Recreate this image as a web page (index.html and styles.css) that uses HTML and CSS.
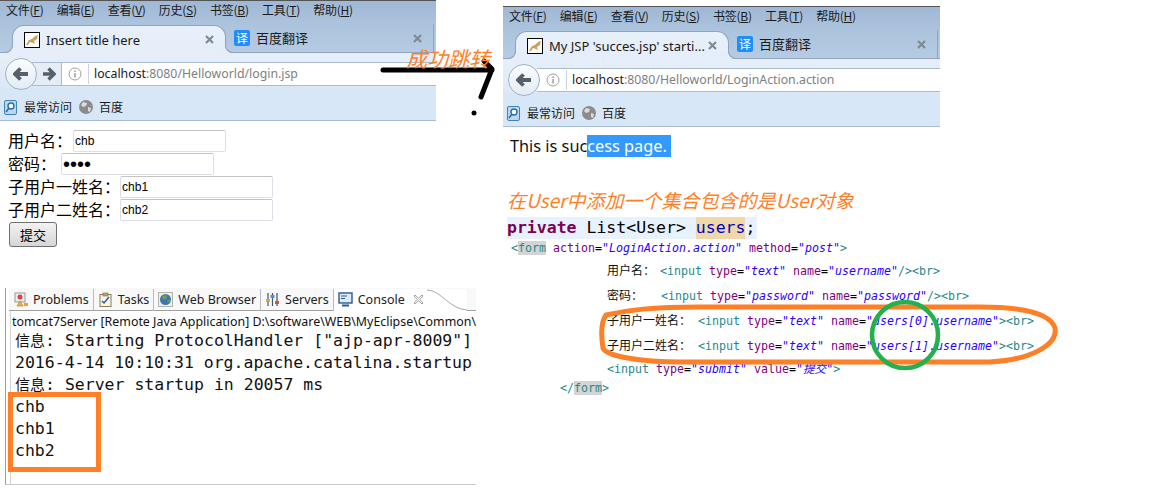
FILE: index.html
```html
<!DOCTYPE html>
<html lang="zh">
<head>
<meta charset="utf-8">
<title>Login collage</title>
<link rel="stylesheet" href="styles.css">
</head>
<body>
<svg width="0" height="0" class="defs">
  <defs>
    <symbol id="tomcat" viewBox="0 0 16 16">
      <rect x=".5" y=".5" width="15" height="15" fill="#fff" stroke="#000"/>
      <path d="M2 13l3-5 3-1 3-3 3-1-1 4-3 2 1 3-2-1-3-1-2 3z" fill="#c9a25c"/>
    </symbol>
    <symbol id="lib" viewBox="0 0 14 15">
      <rect x=".5" y=".5" width="12" height="14" rx="1.5" fill="#bcd8f0" stroke="#3f82b8"/>
      <circle cx="7" cy="6" r="3" fill="#fff" stroke="#2b6ea6" stroke-width="1.4"/>
      <path d="M5 8l-3 4" stroke="#2b6ea6" stroke-width="1.6"/>
    </symbol>
    <symbol id="globe" viewBox="0 0 14 14">
      <circle cx="7" cy="7" r="7" fill="#8b8b8b"/>
      <path d="M4 2l4 1-1 3-3 1-2-2zM9 7l3 1-1 4-2-1z" fill="#dcdcdc"/>
    </symbol>
    <symbol id="back" viewBox="0 0 16 14">
      <path d="M7.500 1.500L2 7l5.500 5.500M3 7h12" fill="none" stroke="#56606a" stroke-width="3.800"/>
    </symbol>
    <symbol id="forward" viewBox="0 0 14 14">
      <path d="M6.500 1.500L12 7l-5.500 5.500M11 7H1" fill="none" stroke="#56606a" stroke-width="3.400"/>
    </symbol>
    <symbol id="info" viewBox="0 0 14 14">
      <circle cx="7" cy="7" r="6" fill="none" stroke="#a0a0a0"/>
      <path d="M7 6v4.500M7 3.500v1.500" stroke="#909090" stroke-width="1.300"/>
    </symbol>
    <symbol id="close" viewBox="0 0 9 9">
      <path d="M1 1l7 7M8 1L1 8" stroke="#7f8a96" stroke-width="2.200"/>
    </symbol>
    <symbol id="i-problems" viewBox="0 0 15 15">
      <rect x="2" y="1" width="10" height="9" fill="#eee" stroke="#999"/>
      <circle cx="7" cy="5" r="2.500" fill="#d8404a"/>
      <path d="M4 14l3-5 3 5z" fill="#f2b632" stroke="#a87a10" stroke-width=".6"/>
      <path d="M11 14h4v-3h-4z" fill="#e9a23b"/>
    </symbol>
    <symbol id="i-tasks" viewBox="0 0 15 15">
      <rect x="2" y="2.500" width="11" height="12" fill="#fbf6e4" stroke="#8c7a50"/>
      <rect x="5" y="1" width="5" height="3" fill="#b5a577" stroke="#7a6a40" stroke-width=".6"/>
      <path d="M4 9l2 2 5-6" fill="none" stroke="#2f55b8" stroke-width="1.500"/>
    </symbol>
    <symbol id="i-web" viewBox="0 0 15 15">
      <rect x=".5" y=".5" width="14" height="14" fill="#eef0ea" stroke="#b3b3a6"/>
      <circle cx="7.500" cy="7.500" r="5.500" fill="#3f76b0"/>
      <path d="M4 4l4-1 1 3-3 2zM9 8l3 0-2 3z" fill="#6fa344"/>
    </symbol>
    <symbol id="i-servers" viewBox="0 0 15 15">
      <path d="M3 1v13M7.500 1v13M12 1v13" stroke="#45556a" stroke-width="1.200"/>
      <rect x="1" y="7" width="4" height="3" fill="#d9a93a"/>
      <rect x="5.500" y="3" width="4" height="3" fill="#5c8fc4"/>
      <rect x="10" y="9" width="4" height="3" fill="#c95a3c"/>
    </symbol>
    <symbol id="i-console" viewBox="0 0 15 15">
      <rect x="1" y="1" width="13" height="10" fill="#dfeaf6" stroke="#2a5a8e" stroke-width="1.400"/>
      <path d="M3 4h6M3 6.500h4" stroke="#2a5a8e"/>
      <path d="M4 13.500h7" stroke="#2a5a8e" stroke-width="2"/>
    </symbol>
    <symbol id="i-x" viewBox="0 0 11 11">
      <path d="M2 1l3.500 3.200L9 1l1 1-3.200 3.500L10 9 9 10 5.500 6.800 2 10 1 9l3.200-3.500L1 2z" fill="#fff" stroke="#8a8a8a" stroke-width=".8"/>
    </symbol>
  </defs>
</svg>

<section class="window win-left">
  <div class="menubar"><span>文件(<u>F</u>)</span><span>编辑(<u>E</u>)</span><span>查看(<u>V</u>)</span><span>历史(<u>S</u>)</span><span>书签(<u>B</u>)</span><span>工具(<u>T</u>)</span><span>帮助(<u>H</u>)</span></div>
  <div class="tabstrip">
    <div class="tab tab-active"><svg class="fav"><use href="#tomcat"/></svg><span class="tab-title">Insert title here</span><svg class="x"><use href="#close"/></svg></div>
    <div class="tab tab-rest"><span class="yi">译</span><span class="tab-title">百度翻译</span><svg class="x"><use href="#close"/></svg></div>
  </div>
  <div class="navbar">
    <div class="backbtn"><svg class="arrow"><use href="#back"/></svg></div>
    <div class="fwdbtn"><svg class="arrow-f"><use href="#forward"/></svg></div>
    <div class="urlbar"><svg class="info"><use href="#info"/></svg><span class="url"><b>localhost</b>:8080/Helloworld/login.jsp</span></div>
  </div>
  <div class="bookmarks"><svg class="lib"><use href="#lib"/></svg><span>最常访问</span><svg class="globe"><use href="#globe"/></svg><span>百度</span></div>
</section>

<form class="login">
  <div class="row"><span class="lbl">用户名<span class="colon">：</span></span><input class="field gap-1" value="chb"></div>
  <div class="row"><span class="lbl">密码<span class="colon">：</span></span><input class="field pw" type="password" value="abcd"></div>
  <div class="row"><span class="lbl">子用户一姓名<span class="colon">：</span></span><input class="field" value="chb1"></div>
  <div class="row"><span class="lbl">子用户二姓名<span class="colon">：</span></span><input class="field" value="chb2"></div>
  <button class="submit" type="button">提交</button>
</form>

<section class="console">
  <div class="views">
    <span class="view"><svg class="ico"><use href="#i-problems"/></svg>Problems</span>
    <span class="view"><svg class="ico"><use href="#i-tasks"/></svg>Tasks</span>
    <span class="view"><svg class="ico"><use href="#i-web"/></svg>Web Browser</span>
    <span class="view"><svg class="ico"><use href="#i-servers"/></svg>Servers</span>
    <span class="view view-on"><svg class="ico"><use href="#i-console"/></svg>Console<svg class="vx"><use href="#i-x"/></svg><svg class="curve" viewBox="0 0 40 22"><path d="M0 1C14 1 22 20 40 21" fill="none" stroke="#aaa"/></svg></span>
  </div>
  <div class="proc">tomcat7Server [Remote Java Application] D:\software\WEB\MyEclipse\Common\</div>
  <pre class="log"><span class="cjk">信息</span>: Starting ProtocolHandler ["ajp-apr-8009"]
2016-4-14 10:10:31 org.apache.catalina.startup
<span class="cjk">信息</span>: Server startup in 20057 ms
chb
chb1
chb2</pre>
</section>
<div class="box-orange"></div>

<section class="window win-right">
  <div class="menubar"><span>文件(<u>F</u>)</span><span>编辑(<u>E</u>)</span><span>查看(<u>V</u>)</span><span>历史(<u>S</u>)</span><span>书签(<u>B</u>)</span><span>工具(<u>T</u>)</span><span>帮助(<u>H</u>)</span></div>
  <div class="tabstrip">
    <div class="tab tab-active"><svg class="fav"><use href="#tomcat"/></svg><span class="tab-title">My JSP 'succes.jsp' starti...</span><svg class="x"><use href="#close"/></svg></div>
    <div class="tab tab-rest"><span class="yi">译</span><span class="tab-title">百度翻译</span><svg class="x"><use href="#close"/></svg></div>
  </div>
  <div class="navbar">
    <div class="backbtn"><svg class="arrow"><use href="#back"/></svg></div>
    <div class="urlbar url-right"><svg class="info"><use href="#info"/></svg><span class="url"><b>localhost</b>:8080/Helloworld/LoginAction.action</span></div>
  </div>
  <div class="bookmarks"><svg class="lib"><use href="#lib"/></svg><span>最常访问</span><svg class="globe"><use href="#globe"/></svg><span>百度</span></div>
</section>

<section class="notes">
  <p class="success">This is suc<span class="sel">cess page.&nbsp;</span></p>
  <p class="note2">在User中添加一个集合包含的是User对象</p>
  <div class="decl"><b>private</b> List&lt;User&gt; <span class="occ">users</span>;</div>
  <div class="code">
    <div class="ln ln-form"><i>&lt;</i><span class="hl"><i>form</i></span> <s>action</s>=<q>"LoginAction.action"</q> <s>method</s>=<q>"post"</q><i>&gt;</i></div>
    <div class="ln in1"><span class="zh">用户名<span class="colon">：</span></span><i>&lt;input</i> <s>type</s>=<q>"text"</q> <s>name</s>=<q>"username"</q><i>/&gt;&lt;br&gt;</i></div>
    <div class="ln in1"><span class="zh pw-label">密码<span class="colon">：</span></span><i>&lt;input</i> <s>type</s>=<q>"password"</q> <s>name</s>=<q>"password"</q><i>/&gt;&lt;br&gt;</i></div>
    <div class="ln in1"><span class="zh zh-long">子用户一姓名<span class="colon">：</span></span><i>&lt;input</i> <s>type</s>=<q>"text"</q> <s>name</s>=<q>"users[0].username"</q><i>&gt;&lt;br&gt;</i></div>
    <div class="ln in1"><span class="zh zh-long">子用户二姓名<span class="colon">：</span></span><i>&lt;input</i> <s>type</s>=<q>"text"</q> <s>name</s>=<q>"users[1].username"</q><i>&gt;&lt;br&gt;</i></div>
    <div class="ln in1"><i>&lt;input</i> <s>type</s>=<q>"submit"</q> <s>value</s>=<q>"提交"</q><i>&gt;</i></div>
    <div class="ln in0"><i>&lt;/</i><span class="hl"><i>form</i></span><i>&gt;</i></div>
  </div>
</section>

<svg class="annot" width="1161" height="497" viewBox="0 0 1161 497">
  <path d="M383 70H492M484 61L492 69 481 97" fill="none" stroke="#000" stroke-width="5" stroke-linecap="round" stroke-linejoin="round"/>
  <circle cx="474" cy="113" r="2.500" fill="#000"/>
  <path d="M606 315C630 310 650 307 700 307H980C1020 307 1050 312 1055 328 1058 345 1030 360 990 362H680C640 362 606 356 603 348 601 335 601 322 606 315Z" fill="none" stroke="#ff7f27" stroke-width="5"/>
  <circle cx="905" cy="335" r="33" fill="none" stroke="#22b14c" stroke-width="4.500"/>
</svg>
<div class="jump">成功跳转</div>
</body>
</html>
```

FILE: styles.css
```css
* { box-sizing: border-box; }
html, body { margin: 0; padding: 0; }
body {
  position: relative;
  width: 1161px;
  height: 497px;
  overflow: hidden;
  background: #fff;
  font-family: "Liberation Sans", "Noto Sans CJK SC", sans-serif;
  color: #000;
}
.defs { position: absolute; }
.colon { font-family: "Noto Sans CJK TC", sans-serif; }

/* browser windows */
.window {
  position: absolute;
  display: flex;
  flex-direction: column;
  overflow: hidden;
  background: #d8e7f7;
  border-bottom: 1px solid #a9bdd2;
}
.win-left { left: 0; top: 0; width: 436px; height: 121px; border-top: 1px solid #555; }
.win-right { left: 503px; top: 6px; width: 437px; height: 121px; border-top: 1px solid #555; }
.menubar {
  display: flex;
  gap: 13.200px;
  height: 19px;
  padding: 1px 0 0 6px;
  font: 12px/16px "Noto Sans CJK SC", sans-serif;
  color: #1a1a1a;
  background: linear-gradient(#9fb8d5, #a9c1db);
}
.menubar span { white-space: nowrap; letter-spacing: -0.25px; }
.tabstrip {
  display: flex;
  align-items: flex-end;
  height: 33px;
  padding-left: 12px;
  background: linear-gradient(#aac2dc, #b6cbe3);
  border-bottom: 1px solid #8ea5bd;
}
.tab {
  position: relative;
  display: flex;
  align-items: center;
  height: 28px;
  font: 13px/16px "Noto Sans", "Noto Sans CJK SC", sans-serif;
  color: #1a1a1a;
}
.tab-active {
  flex: none;
  width: 214px;
  background: linear-gradient(#e8f0fa, #e4edf9);
  border: 1px solid #8ea5bd;
  border-bottom: 0;
  border-radius: 12px 12px 0 0;
  margin-bottom: -1px;
  padding: 0 11px 0 11px;
}
.tab-active::before,
.tab-active::after {
  content: "";
  position: absolute;
  bottom: 0;
  width: 8px;
  height: 8px;
  border-bottom: 1px solid #8ea5bd;
  background: transparent;
}
.tab-active::before {
  left: -9px;
  border-right: 1px solid #8ea5bd;
  border-bottom-right-radius: 8px;
  box-shadow: 3px 3px 0 1px #e4edf9;
}
.tab-active::after {
  right: -9px;
  border-left: 1px solid #8ea5bd;
  border-bottom-left-radius: 8px;
  box-shadow: -3px 3px 0 1px #e4edf9;
}
.tab-rest { flex: 1; padding: 0 11px 0 8px; border-right: 1px solid #8ea5bd; margin-right: 2px; }
.fav { width: 16px; height: 16px; flex: none; }
.tab-title { flex: 1; margin-left: 6px; white-space: nowrap; overflow: hidden; }
.x { width: 9px; height: 9px; flex: none; }
.yi {
  flex: none;
  width: 16px;
  height: 16px;
  border-radius: 2px;
  background: #1e8ffa;
  color: #fff;
  font: 12px/16px "Noto Sans CJK SC", sans-serif;
  text-align: center;
}
.navbar {
  display: flex;
  align-items: center;
  height: 34px;
  padding: 7px 0 0 5px;
  background: linear-gradient(#e6eff9, #dde9f7);
}
.backbtn {
  flex: none;
  z-index: 1;
  width: 32px;
  height: 32px;
  border: 1px solid #9fb2c6;
  border-radius: 50%;
  background: linear-gradient(#fbfdff, #e3ebf4);
  display: flex;
  align-items: center;
  justify-content: center;
}
.arrow { width: 16px; height: 14px; }
.fwdbtn {
  flex: none;
  width: 30px;
  height: 24px;
  margin-left: -5px;
  border: 1px solid #a9bbcf;
  border-left: 0;
  background: #e4ecf5;
  display: flex;
  align-items: center;
  justify-content: center;
}
.arrow-f { width: 14px; height: 14px; margin-left: 4px; }
.urlbar {
  flex: 1;
  display: flex;
  align-items: center;
  height: 24px;
  padding-left: 6px;
  background: #fff;
  border-top: 1px solid #a9bbcf;
  border-bottom: 1px solid #a9bbcf;
}
.url-right { margin-left: -3px; padding-left: 9px; }
.info { width: 14px; height: 14px; flex: none; }
.url {
  margin-left: 6px;
  padding-left: 5px;
  border-left: 1px solid #ccd3da;
  font: 12.300px/20px "Noto Sans", sans-serif;
  color: #808080;
  white-space: nowrap;
}
.url b { font-weight: 400; color: #1a1a1a; }
.bookmarks {
  display: flex;
  align-items: center;
  flex: 1;
  padding: 7px 0 0 4px;
  font: 12px/16px "Noto Sans CJK SC", sans-serif;
  color: #1a1a1a;
}
.lib { width: 14px; height: 15px; margin-right: 6px; }
.globe { width: 14px; height: 14px; margin: 0 6px 0 7px; }

/* login form */
.login {
  position: absolute;
  left: 8px;
  top: 130px;
  display: flex;
  flex-direction: column;
  gap: 1px;
  font: 16px/22px "Noto Sans CJK SC", sans-serif;
}
.row { display: flex; align-items: center; height: 22px; }
.lbl { padding-bottom: 2px; }
.field {
  height: 22px;
  width: 153px;
  margin: 0;
  padding: 0 1px;
  border: 1px solid #dcdfe6;
  border-top-color: #c4c4c4;
  border-radius: 2px;
  font: 12px "Liberation Sans", sans-serif;
  color: #000;
  background: #fff;
}
.gap-1 { margin-left: 1px; }
.pw { margin-left: 5px; font-size: 20px; }
.submit {
  width: 48px;
  height: 25px;
  margin: 0 0 0 1px;
  padding: 0;
  border: 1px solid #707070;
  border-radius: 3px;
  background: linear-gradient(#f2f2f2, #d6d6d6);
  font: 13px "Noto Sans CJK SC", sans-serif;
  color: #000;
}

/* console */
.console {
  position: absolute;
  left: 5px;
  top: 288px;
  width: 471px;
  height: 197px;
  border-left: 1px solid #a0a0a0;
  border-bottom: 1px solid #c8c8c8;
  padding-left: 4px;
  overflow: hidden;
  background: linear-gradient(#d4d4d4, #d4d4d4) 4px 0 / 1px 100% no-repeat #fff;
}
.views {
  display: flex;
  align-items: center;
  height: 23px;
  padding-top: 1px;
  margin-left: -1px;
  border-bottom: 1px solid #a0a0a0;
  font: 12.500px/20px "Noto Sans", sans-serif;
  color: #222;
  background: #f8f8f8;
}
.view {
  display: flex;
  align-items: center;
  gap: 5px;
  height: 22px;
  padding: 0 4px;
  border-right: 1px solid #bbb;
  white-space: nowrap;
}
.view-on { background: #fff; border-right: 0; padding-right: 0; }
.vx { width: 11px; height: 11px; margin-left: 3px; }
.curve { width: 40px; height: 22px; margin-left: -2px; }
.ico { display: block; flex: none; width: 15px; height: 15px; }
.proc {
  height: 17px;
  margin: 2px 0 0 2px;
  font: 12.400px/17px "Noto Sans", sans-serif;
  white-space: nowrap;
  overflow: hidden;
  color: #111;
}
.log {
  margin: 0;
  padding-left: 5px;
  font: 16.500px/21.900px "DejaVu Sans Mono", "Noto Sans CJK SC", monospace;
  color: #111;
  white-space: pre;
}
.cjk { font: 15px/1 "Noto Sans CJK SC", sans-serif; }
.box-orange {
  position: absolute;
  left: 8px;
  top: 392px;
  width: 93px;
  height: 80px;
  border: 5px solid #ff7f27;
}

/* right notes */
.notes { position: absolute; left: 507px; top: 135px; width: 600px; }
.success { margin: 1px 0 0 3px; font: 16.300px/21px "Noto Sans", sans-serif; color: #111; }
.sel { background: #3399ff; color: #fff; }
.note2 {
  margin: 31px 0 0 0;
  font: italic 19px/24px "Noto Sans CJK SC", sans-serif;
  color: #ff7f27;
  white-space: nowrap;
}
.decl {
  width: 250px;
  height: 22px;
  margin-top: 5px;
  background: #e8f2fe;
  font: 16.500px/22px "DejaVu Sans Mono", monospace;
  white-space: pre;
}
.decl b { color: #7f0055; }
.occ { display: inline-block; height: 22px; background: #f0d8a8; color: #0000c0; }
.code {
  display: flex;
  flex-direction: column;
  margin-top: -3px;
  font: 11.630px/25px "DejaVu Sans Mono", "Noto Sans CJK SC", monospace;
}
.ln { height: 25px; white-space: pre; }
.ln i { font-style: normal; color: #1f8a8a; }
.ln s { text-decoration: none; color: #7f007f; }
.ln q { quotes: none; font-style: italic; color: #2a00ff; }
.hl { background: #d4d4d4; }
.zh { margin-right: 5px; font: 12px/25px "Noto Sans CJK SC", sans-serif; color: #111; }
.pw-label { margin-right: 18px; }
.zh-long { margin-right: 7px; }
.ln-form { margin: 0 0 -4px 4px; }
.in1 { margin-left: 100px; }
.in0 { margin: -6px 0 0 53px; }

/* annotation overlay */
.annot { position: absolute; left: 0; top: 0; pointer-events: none; }
.jump {
  position: absolute;
  left: 406px;
  top: 46px;
  font: italic 21px/24px "Noto Sans CJK SC", sans-serif;
  color: #ff7f27;
}
```
